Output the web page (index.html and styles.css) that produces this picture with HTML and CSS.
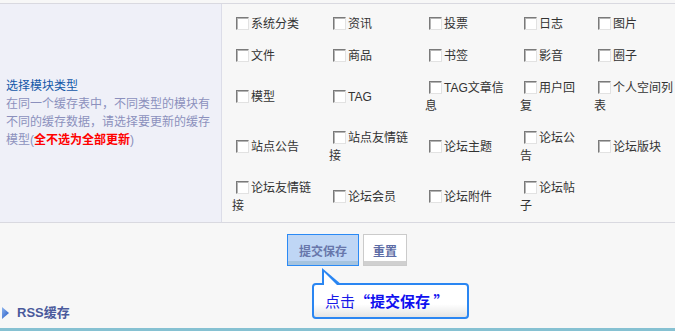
FILE: index.html
```html
<!DOCTYPE html>
<html lang="zh-CN">
<head>
    <meta charset="UTF-8">
    <title>更新缓存</title>
    <link rel="stylesheet" href="styles.css">
</head>
<body>
    <div class="cfg">
        <div class="label">
            <div>
                <div class="label-title">选择模块类型</div>
                <div class="label-desc">在同一个缓存表中，不同类型的模块有不同的缓存数据，请选择要更新的缓存模型(<b class="warn">全不选为全部更新</b>)</div>
            </div>
        </div>
        <div class="opts">
            <label class="opt"><input type="checkbox">系统分类</label>
            <label class="opt"><input type="checkbox">资讯</label>
            <label class="opt"><input type="checkbox">投票</label>
            <label class="opt"><input type="checkbox">日志</label>
            <label class="opt"><input type="checkbox">图片</label>

            <label class="opt"><input type="checkbox">文件</label>
            <label class="opt"><input type="checkbox">商品</label>
            <label class="opt"><input type="checkbox">书签</label>
            <label class="opt"><input type="checkbox">影音</label>
            <label class="opt"><input type="checkbox">圈子</label>

            <label class="opt"><input type="checkbox">模型</label>
            <label class="opt"><input type="checkbox">TAG</label>
            <label class="opt"><input type="checkbox">TAG文章信息</label>
            <label class="opt"><input type="checkbox">用户回复</label>
            <label class="opt"><input type="checkbox">个人空间列表</label>

            <label class="opt"><input type="checkbox">站点公告</label>
            <label class="opt"><input type="checkbox">站点友情链接</label>
            <label class="opt"><input type="checkbox">论坛主题</label>
            <label class="opt"><input type="checkbox">论坛公告</label>
            <label class="opt"><input type="checkbox">论坛版块</label>

            <label class="opt"><input type="checkbox">论坛友情链接</label>
            <label class="opt"><input type="checkbox">论坛会员</label>
            <label class="opt"><input type="checkbox">论坛附件</label>
            <label class="opt"><input type="checkbox">论坛帖子</label>
        </div>
    </div>

    <div class="actions">
        <button class="btn btn-submit">提交保存</button>
        <button class="btn btn-reset">重置</button>
        <div class="tip">点击<b>“提交保存 ”</b></div>
    </div>

    <h3 class="section">
        <svg class="section-arrow" width="7" height="12" viewBox="0 0 7 12">
            <defs>
                <linearGradient id="arr" x1="0" y1="0" x2="1" y2="1">
                    <stop offset="0" stop-color="#8fb6ee"/>
                    <stop offset="1" stop-color="#1f55c4"/>
                </linearGradient>
            </defs>
            <path d="M0 0 L7 6 L0 12 Z" fill="url(#arr)"/>
        </svg>
        RSS缓存
    </h3>
</body>
</html>
```

FILE: styles.css
```css
html, body {
    margin: 0;
    overflow: hidden;
}
body {
    background: #f7f7f7;
    font-family: "Liberation Sans", "Noto Sans CJK SC", sans-serif;
    font-size: 12px;
    color: #333;
    padding-top: 3px;
}
.cfg {
    display: flex;
    border-top: 1px solid #d9d9e0;
    border-bottom: 1px solid #d9d9e0;
}
.label {
    width: 222px;
    box-sizing: border-box;
    flex-shrink: 0;
    display: flex;
    align-items: center;
    padding: 0 8px 0 6px;
    background: #eff0f8;
    border-right: 1px solid #dcdde8;
    line-height: 18px;
}
.label-title {
    color: #1458a8;
}
.label-desc {
    color: #8c90bd;
}
.warn {
    color: #ff0000;
}
.opts {
    flex: 1;
    display: grid;
    grid-template-columns: 97px 96px 95px 74px 1fr;
    align-items: center;
    padding: 4px 0 0 10px;
}
.opt {
    padding: 7px 8px 7px 0;
    line-height: 18px;
}
.opt:nth-child(5n+4) {
    padding-right: 10px;
}
.opt:nth-child(5n) {
    padding-right: 0;
}
.opt input {
    appearance: none;
    -webkit-appearance: none;
    width: 13px;
    height: 13px;
    margin: 0 2px 0 4px;
    vertical-align: -2px;
    background: #fff;
    border: 1px solid;
    border-color: #7a7a7a #e2e2e2 #e2e2e2 #7a7a7a;
    box-shadow: inset 1px 1px 0 #b5b5b5;
    box-sizing: border-box;
}
.actions {
    position: relative;
    padding: 11px 0 38px 19px;
    text-align: center;
    font-size: 0;
}
.btn {
    height: 32px;
    margin: 0 2px;
    font-family: "Noto Sans CJK SC", sans-serif;
    font-size: 12px;
    font-weight: bold;
    color: #6877ab;
    cursor: pointer;
    vertical-align: top;
}
.btn-submit {
    width: 72px;
    background: #bfd6f5;
    border: 1px solid #2b8af5;
    box-shadow: inset 0 -4px 0 #a6c4df;
}
.btn-reset {
    width: 44px;
    background: #fff;
    border: 1px solid #cbcbcb;
    box-shadow: inset 0 -4px 0 #d0d0d0;
    color: #5d6ca6;
}
.tip {
    position: absolute;
    left: 312px;
    top: 60px;
    width: 157px;
    height: 36px;
    box-sizing: border-box;
    padding-left: 11px;
    border: 2px solid #2a86f2;
    border-radius: 4px;
    background: linear-gradient(#fff 60%, #e4e4e4);
    font-family: "Noto Sans CJK SC", sans-serif;
    font-size: 15px;
    line-height: 31px;
    color: #1818e8;
    text-align: left;
}
.tip b {
    color: #1010f0;
}
.tip::before {
    content: "";
    position: absolute;
    left: 8px;
    top: -17px;
    border-right: 20px solid transparent;
    border-bottom: 17px solid #2a86f2;
}
.tip::after {
    content: "";
    position: absolute;
    left: 10px;
    top: -13px;
    border-right: 15px solid transparent;
    border-bottom: 15px solid #fff;
}
.section {
    margin: 0;
    padding: 0 0 6px 2px;
    border-bottom: 3px solid #86c1d2;
    font-size: 13px;
    line-height: 18px;
    color: #4a5a9c;
    display: flex;
    align-items: center;
    gap: 8px;
}
.section-arrow {
    display: block;
}
```
